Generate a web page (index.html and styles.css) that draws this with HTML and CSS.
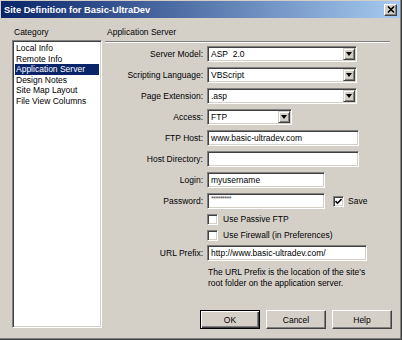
FILE: index.html
```html
<!DOCTYPE html>
<html lang="en">

<head>
    <meta charset="UTF-8">
    <meta name="viewport" content="width=device-width, initial-scale=1.0">
    <title>Site Definition for Basic-UltraDev</title>
    <link rel="stylesheet" href="styles.css">
</head>

<body>
    <main class="window">
        <header class="titlebar">
            <span>Site Definition for Basic-UltraDev</span>
            <button class="close" aria-label="close">
                <svg width="8" height="7" viewBox="0 0 8 7">
                    <path d="M1 0.5 L7 6.5 M7 0.5 L1 6.5" stroke="#000" stroke-width="1.6" fill="none" />
                </svg>
            </button>
        </header>

        <div class="content">
            <aside class="category">
                <div class="caption">Category</div>
                <ul class="list">
                    <li>Local Info</li>
                    <li>Remote Info</li>
                    <li class="is-selected">Application Server</li>
                    <li>Design Notes</li>
                    <li>Site Map Layout</li>
                    <li>File View Columns</li>
                </ul>
            </aside>

            <section class="panel">
                <div class="caption heading">Application Server</div>
                <div class="rule"></div>

                <div class="form">
                    <div class="row">
                        <label>Server Model:</label>
                        <div class="select is-wide"><span>ASP&nbsp; 2.0</span><i></i></div>
                    </div>
                    <div class="row">
                        <label>Scripting Language:</label>
                        <div class="select is-wide"><span>VBScript</span><i></i></div>
                    </div>
                    <div class="row">
                        <label>Page Extension:</label>
                        <div class="select is-wide"><span>.asp</span><i></i></div>
                    </div>
                    <div class="row">
                        <label>Access:</label>
                        <div class="select is-short"><span>FTP</span><i></i></div>
                    </div>
                    <div class="row">
                        <label>FTP Host:</label>
                        <div class="field is-wide">www.basic-ultradev.com</div>
                    </div>
                    <div class="row">
                        <label>Host Directory:</label>
                        <div class="field is-wide"></div>
                    </div>
                    <div class="row">
                        <label>Login:</label>
                        <div class="field is-mid">myusername</div>
                    </div>
                    <div class="row">
                        <label>Password:</label>
                        <div class="inline">
                            <div class="field is-mid is-secret">*********</div>
                            <div class="check save"><span class="box is-checked"><svg width="7" height="7" viewBox="0 0 7 7"><path d="M0.5 3 L2.5 5.2 L6.5 1" stroke="#000" stroke-width="1.6" fill="none" /></svg></span>Save</div>
                        </div>
                    </div>
                    <div class="row is-check first">
                        <label></label>
                        <div class="check"><span class="box"></span>Use Passive FTP</div>
                    </div>
                    <div class="row is-check">
                        <label></label>
                        <div class="check"><span class="box"></span>Use Firewall (in Preferences)</div>
                    </div>
                    <div class="row is-url">
                        <label>URL Prefix:</label>
                        <div class="field is-url">http://www.basic-ultradev.com/</div>
                    </div>
                    <div class="row is-note">
                        <label></label>
                        <p>The URL Prefix is the location of the site's<br>root folder on the application server.</p>
                    </div>
                </div>

                <footer class="buttons">
                    <button class="is-default">OK</button>
                    <button>Cancel</button>
                    <button>Help</button>
                </footer>
            </section>
        </div>
    </main>
</body>

</html>
```

FILE: styles.css
```css
*,
*::before,
*::after {
    box-sizing: border-box;
    margin: 0;
    padding: 0;
}

body {
    font-family: 'Liberation Sans', Arial, sans-serif;
    font-size: 8.5px;
    color: #000;
    background: #d4d0c8;
    user-select: none;
}

.window {
    width: 402px;
    height: 340px;
    display: flex;
    flex-direction: column;
    padding: 1px 2px 3px 1px;
    background: #d4d0c8;
    box-shadow: inset -1px -1px #404040, inset -2px -2px #808080;
}

.titlebar {
    height: 17px;
    display: flex;
    align-items: center;
    justify-content: space-between;
    padding-left: 3px;
    background: linear-gradient(to right, #0a246a, #a6caf0);
    color: #fff;
    font-size: 9.3px;
    font-weight: bold;

    & .close {
        width: 13px;
        height: 12px;
        margin-right: 3px;
        display: grid;
        place-content: center;
        background: #d4d0c8;
        border: 1px solid;
        border-color: #fff #404040 #404040 #fff;
        box-shadow: inset -1px -1px #808080;
    }
}

.content {
    flex: 1;
    display: flex;
    gap: 3px;
    padding: 9px 7px 9px 11px;
}

.caption {
    height: 11px;
    line-height: 11px;
    padding-left: 2px;
}

.category {
    width: 90px;
    display: flex;
    flex-direction: column;
    gap: 2px;
}

.list {
    flex: 1;
    list-style: none;
    background: #fff;
    border: 1px solid;
    border-color: #808080 #fff #fff #808080;
    box-shadow: inset 1px 1px #404040, inset -1px -1px #d4d0c8;
    padding: 2px 2px 0 2px;

    & li {
        height: 10.6px;
        line-height: 10.6px;
        padding-left: 1px;
        white-space: nowrap;

        &.is-selected {
            background: #0a246a;
            color: #fff;
        }
    }
}

.panel {
    flex: 1;
    display: flex;
    flex-direction: column;
}

.heading {
    padding-left: 2px;
}

.rule {
    height: 2px;
    margin: 3px 3px 0 0;
    border-top: 1px solid #808080;
    border-bottom: 1px solid #fff;
}

.form {
    display: flex;
    flex-direction: column;
    gap: 5px;
    margin-top: 3px;
}

.row {
    display: grid;
    grid-template-columns: 98px auto;
    column-gap: 4px;
    align-items: center;
    height: 16px;

    & label {
        text-align: right;
        white-space: nowrap;
    }

    &.is-check {
        margin-top: -5px;
    }

    &.is-check.first {
        margin-top: -3px;
    }

    &.is-url {
        margin-top: -3px;
    }

    &.is-note {
        height: auto;
        margin-top: 1px;
        line-height: 11px;

        & p {
            padding-left: 1px;
        }
    }
}

.select,
.field {
    height: 16px;
    background: #fff;
    border: 1px solid;
    border-color: #808080 #fff #fff #808080;
    box-shadow: inset 1px 1px #404040, inset -1px -1px #d4d0c8;
    line-height: 14px;
    padding-left: 3px;
    white-space: nowrap;
    overflow: hidden;
}

.select {
    display: flex;
    justify-content: space-between;
    padding: 1px 1px 1px 3px;
    line-height: 12px;

    & i {
        width: 12px;
        height: 12px;
        display: grid;
        place-content: center;
        background: #d4d0c8;
        border: 1px solid;
        border-color: #d4d0c8 #404040 #404040 #d4d0c8;
        box-shadow: inset 1px 1px #fff, inset -1px -1px #808080;

        &::before {
            content: '';
            border-left: 3.5px solid transparent;
            border-right: 3.5px solid transparent;
            border-top: 4px solid #000;
        }
    }

    &.is-wide {
        width: 150px;
    }

    &.is-short {
        width: 85px;
    }
}

.field {
    &.is-wide {
        width: 152px;
    }

    &.is-mid {
        width: 118px;
    }

    &.is-url {
        width: 160px;
    }

    &.is-secret {
        font-size: 7px;
        line-height: 10px;
        letter-spacing: -0.5px;
        color: #444;
    }
}

.inline {
    display: flex;
    align-items: center;
    gap: 8px;
}

.check {
    display: flex;
    align-items: center;
    gap: 5px;
    white-space: nowrap;

    & .box {
        width: 11px;
        height: 11px;
        display: grid;
        place-content: center;
        background: #fff;
        border: 1px solid;
        border-color: #808080 #fff #fff #808080;
        box-shadow: inset 1px 1px #404040, inset -1px -1px #d4d0c8;
    }

    &.save {
        gap: 4px;
    }
}

.buttons {
    margin-top: auto;
    margin-bottom: -1px;
    display: flex;
    justify-content: flex-end;
    gap: 6px;
    padding-right: 1px;

    & button {
        width: 60px;
        height: 19px;
        font: inherit;
        color: #000;
        background: #d4d0c8;
        border: 1px solid;
        border-color: #fff #404040 #404040 #fff;
        box-shadow: inset -1px -1px #808080;

        &.is-default {
            outline: 1px solid #000;
            outline-offset: -1px;
            border-color: #000;
            box-shadow: inset 1px 1px #fff, inset -1px -1px #404040, inset -2px -2px #808080;
        }
    }
}
```
